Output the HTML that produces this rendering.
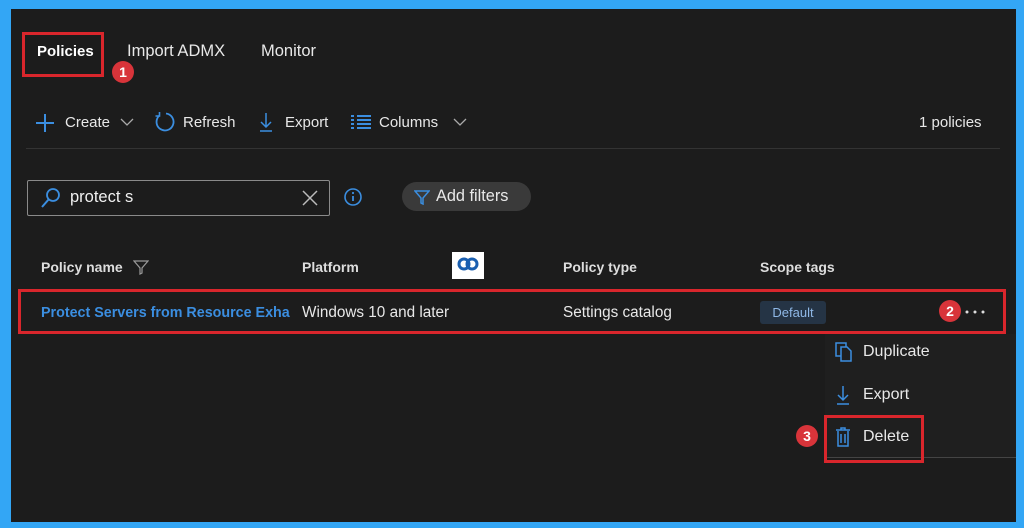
<!DOCTYPE html>
<html><head><meta charset="utf-8"><style>
*{margin:0;padding:0;box-sizing:border-box}
body{width:1024px;height:528px;background:#33a6f5;position:relative;overflow:hidden;font-family:"Liberation Sans",sans-serif;color:#e8e8e8}
#in{position:absolute;left:11px;top:9px;width:1005px;height:513px;background:#1c1c1c}
.a{position:absolute;white-space:nowrap}
.t{font-size:15px}
.rb{position:absolute;border:3px solid #d9262c}
.bd{position:absolute;width:22px;height:22px;border-radius:50%;background:#d8343a;color:#fff;font-size:14px;font-weight:bold;text-align:center;line-height:22px}
.blue{color:#3b8ee0}
.hd{font-weight:bold;font-size:14px;color:#ddd}
</style></head><body>
<div id="in"></div>
<div class="a t" style="left:37px;top:43px;font-weight:bold;color:#fff">Policies</div>
<div class="a" style="left:127px;top:42px;font-size:16.5px">Import ADMX</div>
<div class="a" style="left:261px;top:42px;font-size:16.5px">Monitor</div>
<div class="rb" style="left:22px;top:32px;width:82px;height:45px"></div>
<div class="bd" style="left:112px;top:61px">1</div>

<svg class="a" style="left:34px;top:112px" width="22" height="22"><path d="M11 2v18M2 11h18" stroke="#3b8ee0" stroke-width="2"/></svg>
<div class="a t" style="left:65px;top:114px">Create</div>
<svg class="a" style="left:120px;top:117px" width="14" height="10"><path d="M1 2l6 6 6-6" stroke="#aaa" fill="none" stroke-width="1.3"/></svg>
<svg class="a" style="left:152px;top:110px" width="24" height="24"><path d="M7.5 5.5A8.5 8.5 0 1 0 14 3.5" stroke="#3b8ee0" fill="none" stroke-width="1.8"/><path d="M7.5 2v4h-4" stroke="#3b8ee0" fill="none" stroke-width="1.6"/></svg>
<div class="a t" style="left:183px;top:114px">Refresh</div>
<svg class="a" style="left:258px;top:111px" width="16" height="22"><path d="M8 2v14M3 11l5 5 5-5M2 20h12" stroke="#3b8ee0" fill="none" stroke-width="1.5"/></svg>
<div class="a t" style="left:285px;top:114px">Export</div>
<svg class="a" style="left:350px;top:114px" width="22" height="16"><path d="M1 2h3M1 6h3M1 10h3M1 14h3M7 2h14M7 6h14M7 10h14M7 14h14" stroke="#3b8ee0" stroke-width="2"/></svg>
<div class="a t" style="left:379px;top:114px">Columns</div>
<svg class="a" style="left:453px;top:117px" width="14" height="10"><path d="M1 2l6 6 6-6" stroke="#aaa" fill="none" stroke-width="1.3"/></svg>
<div class="a" style="left:919px;top:114px;font-size:15px">1 policies</div>
<div class="a" style="left:26px;top:148px;width:974px;height:1px;background:#333"></div>

<div class="a" style="left:27px;top:180px;width:303px;height:36px;border:1px solid #8a8a8a;border-radius:2px"></div>
<svg class="a" style="left:40px;top:187px" width="22" height="22"><circle cx="13" cy="8" r="6" stroke="#3b8ee0" fill="none" stroke-width="1.8"/><path d="M9 12L2 20" stroke="#3b8ee0" stroke-width="2"/></svg>
<div class="a" style="left:70px;top:188px;color:#f0f0f0;font-size:16.5px">protect s</div>
<svg class="a" style="left:301px;top:189px" width="18" height="18"><path d="M2 2l14 14M16 2L2 16" stroke="#bbb" stroke-width="1.5"/></svg>
<svg class="a" style="left:343px;top:187px" width="20" height="20"><circle cx="10" cy="10" r="8" stroke="#3b8ee0" fill="none" stroke-width="1.6"/><path d="M10 9v5" stroke="#3b8ee0" stroke-width="1.8"/><circle cx="10" cy="6" r="1.1" fill="#3b8ee0"/></svg>
<div class="a" style="left:402px;top:182px;width:129px;height:29px;border-radius:15px;background:#3a3a3a"></div>
<svg class="a" style="left:414px;top:189px" width="16" height="16"><path d="M1 2h14L9 9v6l-2-1V9z" stroke="#3b8ee0" fill="none" stroke-width="1.5"/></svg>
<div class="a" style="left:436px;top:187px;font-size:16.3px">Add filters</div>

<div class="a hd" style="left:41px;top:259px">Policy name</div>
<svg class="a" style="left:133px;top:259px" width="16" height="16"><path d="M1 2h14L9 9v5l-2 1V9z" stroke="#999" fill="none" stroke-width="1.2"/></svg>
<div class="a hd" style="left:302px;top:259px">Platform</div>
<div class="a" style="left:452px;top:252px;width:32px;height:27px;background:#fff"><svg width="32" height="27"><circle cx="12" cy="12" r="5" stroke="#1a5fb0" fill="none" stroke-width="3"/><circle cx="20" cy="12" r="5" stroke="#1a5fb0" fill="none" stroke-width="3"/></svg></div>
<div class="a hd" style="left:563px;top:259px">Policy type</div>
<div class="a hd" style="left:760px;top:259px">Scope tags</div>

<div class="a blue" style="left:41px;top:305px;font-size:14.3px;font-weight:bold">Protect Servers from Resource Exha</div>
<div class="a" style="left:302px;top:304px;font-size:15.3px">Windows 10 and later</div>
<div class="a" style="left:563px;top:304px;font-size:15.3px">Settings catalog</div>
<div class="a" style="left:760px;top:301px;width:66px;height:23px;background:#253445;border-radius:3px;color:#8fb8e6;font-size:13px;text-align:center;line-height:23px">Default</div>
<svg class="a" style="left:964px;top:308px" width="22" height="8"><circle cx="3" cy="4" r="1.5" fill="#ddd"/><circle cx="11" cy="4" r="1.5" fill="#ddd"/><circle cx="19" cy="4" r="1.5" fill="#ddd"/></svg>
<div class="rb" style="left:18px;top:289px;width:988px;height:45px"></div>
<div class="bd" style="left:939px;top:300px">2</div>

<div class="a" style="left:825px;top:334px;width:191px;height:124px;background:#1f1f1f;border-bottom:1px solid #444"></div>
<svg class="a" style="left:834px;top:341px" width="20" height="22"><rect x="2" y="2" width="10" height="13" stroke="#3b8ee0" fill="none" stroke-width="1.5"/><path d="M7 6h6l4 4v10H7z" stroke="#3b8ee0" fill="#1f1f1f" stroke-width="1.5"/></svg>
<div class="a" style="left:863px;top:343px;font-size:16px">Duplicate</div>
<svg class="a" style="left:835px;top:384px" width="16" height="22"><path d="M8 2v14M3 11l5 5 5-5M2 20h12" stroke="#3b8ee0" fill="none" stroke-width="1.5"/></svg>
<div class="a" style="left:863px;top:386px;font-size:16px">Export</div>
<svg class="a" style="left:835px;top:426px" width="16" height="22"><path d="M1 4h14M6 4V2h4v2M3 5v15h10V5M6 8v9M10 8v9" stroke="#3b8ee0" fill="none" stroke-width="1.5"/></svg>
<div class="a" style="left:863px;top:428px;font-size:16px">Delete</div>
<div class="rb" style="left:824px;top:415px;width:100px;height:48px"></div>
<div class="bd" style="left:796px;top:425px">3</div>
</body></html>
